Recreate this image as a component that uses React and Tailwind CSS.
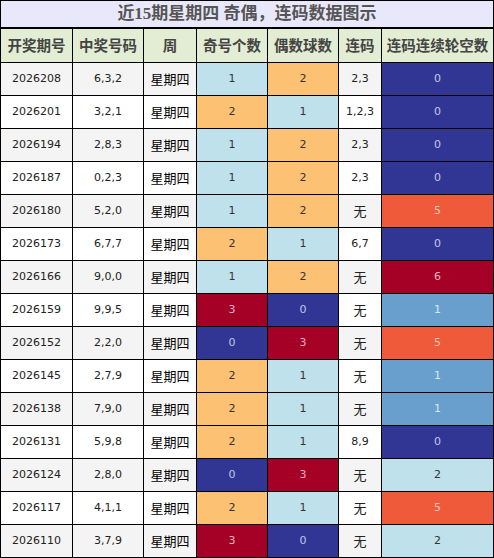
const rows = [
  ['2026208', '6,3,2', 1, 2, '2,3', 0],
  ['2026201', '3,2,1', 2, 1, '1,2,3', 0],
  ['2026194', '2,8,3', 1, 2, '2,3', 0],
  ['2026187', '0,2,3', 1, 2, '2,3', 0],
  ['2026180', '5,2,0', 1, 2, '无', 5],
  ['2026173', '6,7,7', 2, 1, '6,7', 0],
  ['2026166', '9,0,0', 1, 2, '无', 6],
  ['2026159', '9,9,5', 3, 0, '无', 1],
  ['2026152', '2,2,0', 0, 3, '无', 5],
  ['2026145', '2,7,9', 2, 1, '无', 1],
  ['2026138', '7,9,0', 2, 1, '无', 1],
  ['2026131', '5,9,8', 2, 1, '8,9', 0],
  ['2026124', '2,8,0', 0, 3, '无', 2],
  ['2026117', '4,1,1', 2, 1, '无', 5],
  ['2026110', '3,7,9', 3, 0, '无', 2],
]

const oddEven = {
  0: 'bg-[#313695] text-[#c4c6e6]',
  1: 'bg-[#bee1ec] text-[#333]',
  2: 'bg-[#fdc174] text-[#333]',
  3: 'bg-[#a50026] text-[#eab3c0]',
}

const gap = {
  0: 'bg-[#313695] text-[#c4c6e6]',
  1: 'bg-[#689fcd] text-[#d9e8f5]',
  2: 'bg-[#bee1ec] text-[#333]',
  5: 'bg-[#ef5a3b] text-[#f8c7b9]',
  6: 'bg-[#a50026] text-[#eab3c0]',
}

const num = "font-['DejaVu_Sans',sans-serif] text-[11px]"
const cjk = "font-['Noto_Sans_CJK_SC',sans-serif]"

export default function App() {
  return (
    <div className="w-[494px] h-[558px] bg-white">
      <table className="w-[494px] table-fixed border-collapse">
        <colgroup>
          <col className="w-[72px]" />
          <col className="w-[71px]" />
          <col className="w-[53px]" />
          <col className="w-[71px]" />
          <col className="w-[71px]" />
          <col className="w-[43px]" />
          <col />
        </colgroup>
        <thead>
          <tr className="h-[27px]">
            <th
              colSpan={7}
              className="border border-black border-b-2 bg-[#e8e8fa] text-[#555] text-[17px] font-bold leading-none font-['Liberation_Serif','Noto_Sans_CJK_SC',serif]"
            >
              近15期星期四 奇偶，连码数据图示
            </th>
          </tr>
          <tr className={`h-[35px] bg-[#e2edd3] text-[#444] text-[14.5px] font-bold ${cjk}`}>
            {['开奖期号', '中奖号码', '周', '奇号个数', '偶数球数', '连码', '连码连续轮空数'].map(h => (
              <th key={h} className="border border-black font-bold p-0">{h}</th>
            ))}
          </tr>
        </thead>
        <tbody>
          {rows.map(([issue, nums, odd, even, lian, miss], i) => (
            <tr key={issue} className={`h-[33px] ${i % 2 === 0 ? 'bg-[#f4f4f4]' : 'bg-white'}`}>
              <td className={`border border-black text-center text-[#222] ${num}`}>{issue}</td>
              <td className={`border border-black text-center text-[#222] ${num}`}>{nums}</td>
              <td className={`border border-black text-center text-black text-[13px] ${cjk}`}>星期四</td>
              <td className={`border border-black text-center ${num} ${oddEven[odd]}`}>{odd}</td>
              <td className={`border border-black text-center ${num} ${oddEven[even]}`}>{even}</td>
              <td
                className={`border border-black text-center text-[#222] ${lian === '无' ? `text-[13px] ${cjk}` : num}`}
              >
                {lian}
              </td>
              <td className={`border border-black text-center ${num} ${gap[miss]}`}>{miss}</td>
            </tr>
          ))}
        </tbody>
      </table>
    </div>
  )
}
